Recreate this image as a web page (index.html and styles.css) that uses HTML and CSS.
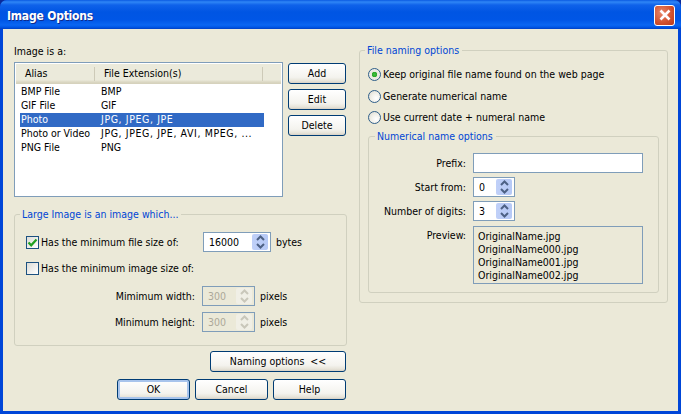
FILE: index.html
```html
<!DOCTYPE html>
<html lang="en">
<head>
<meta charset="utf-8">
<title>Image Options</title>
<link rel="stylesheet" href="styles.css">
</head>
<body>
<div class="window">
  <header class="titlebar">
    <span class="title">Image Options</span>
    <span class="close"><svg width="14" height="14" viewBox="0 0 14 14"><path d="M2.5 2.5 11.5 11.5M11.5 2.5 2.5 11.5" stroke="#fff" stroke-width="2.6" fill="none"/></svg></span>
  </header>
  <div class="client">
    <div class="col-left">
      <div class="caption">Image is a:</div>
      <div class="list-row">
        <div class="list">
          <div class="list-head"><span class="h-alias">Alias</span><span class="h-ext">File Extension(s)</span></div>
          <div class="item"><span class="alias">BMP File</span><span>BMP</span></div>
          <div class="item"><span class="alias">GIF File</span><span>GIF</span></div>
          <div class="item selected"><span class="alias">Photo</span><span class="ext-long">JPG, JPEG, JPE</span></div>
          <div class="item"><span class="alias">Photo or Video</span><span class="ext-long">JPG, JPEG, JPE, AVI, MPEG, ...</span></div>
          <div class="item"><span class="alias">PNG File</span><span>PNG</span></div>
        </div>
        <div class="list-buttons">
          <button class="btn">Add</button>
          <button class="btn">Edit</button>
          <button class="btn">Delete</button>
        </div>
      </div>
      <fieldset class="group large">
        <legend>Large Image is an image which...</legend>
        <div class="row file-row">
          <span class="check"><svg width="11" height="11" viewBox="0 0 11 11"><path d="M1.5 5.5 4.2 8.3 9.5 2.5" stroke="#21a121" stroke-width="2.2" fill="none"/></svg></span>
          <span class="check-label">Has the minimum file size of:</span>
          <div class="spin spin-wide"><span class="spin-value">16000</span><span class="spin-btns"><svg width="9" height="16" viewBox="0 0 9 16"><path d="M1 6 4.5 2.5 8 6M1 10 4.5 13.5 8 10" stroke="#4d6185" stroke-width="2" fill="none"/></svg></span></div>
          <span class="unit">bytes</span>
        </div>
        <div class="row image-row">
          <span class="check check-empty"></span>
          <span class="check-label">Has the minimum image size of:</span>
        </div>
        <div class="row dim-row first-dim">
          <span class="dim-label">Mimimum width:</span>
          <div class="spin spin-narrow disabled"><span class="spin-value">300</span><span class="spin-btns"><svg width="9" height="16" viewBox="0 0 9 16"><path d="M1 6 4.5 2.5 8 6M1 10 4.5 13.5 8 10" stroke="#c9c7ba" stroke-width="2" fill="none"/></svg></span></div>
          <span class="unit">pixels</span>
        </div>
        <div class="row dim-row second-dim">
          <span class="dim-label">Minimum height:</span>
          <div class="spin spin-narrow disabled"><span class="spin-value">300</span><span class="spin-btns"><svg width="9" height="16" viewBox="0 0 9 16"><path d="M1 6 4.5 2.5 8 6M1 10 4.5 13.5 8 10" stroke="#c9c7ba" stroke-width="2" fill="none"/></svg></span></div>
          <span class="unit">pixels</span>
        </div>
      </fieldset>
      <div class="naming-row"><button class="btn naming">Naming options &nbsp;&lt;&lt;</button></div>
      <div class="action-row">
        <button class="btn action default">OK</button>
        <button class="btn action">Cancel</button>
        <button class="btn action">Help</button>
      </div>
    </div>
    <div class="col-right">
      <fieldset class="group naming-group">
        <legend>File naming options</legend>
        <div class="radio-row"><span class="radio on"></span><span>Keep original file name found on the web page</span></div>
        <div class="radio-row r2"><span class="radio"></span><span>Generate numerical name</span></div>
        <div class="radio-row r3"><span class="radio"></span><span>Use current date + numeral name</span></div>
        <fieldset class="group inner">
          <legend>Numerical name options</legend>
          <div class="form">
            <label class="f-label">Prefix:</label>
            <div class="text-box"></div>
            <label class="f-label">Start from:</label>
            <div class="spin spin-small"><span class="spin-value">0</span><span class="spin-btns"><svg width="9" height="16" viewBox="0 0 9 16"><path d="M1 6 4.5 2.5 8 6M1 10 4.5 13.5 8 10" stroke="#4d6185" stroke-width="2" fill="none"/></svg></span></div>
            <label class="f-label">Number of digits:</label>
            <div class="spin spin-small"><span class="spin-value">3</span><span class="spin-btns"><svg width="9" height="16" viewBox="0 0 9 16"><path d="M1 6 4.5 2.5 8 6M1 10 4.5 13.5 8 10" stroke="#4d6185" stroke-width="2" fill="none"/></svg></span></div>
            <label class="f-label preview-label">Preview:</label>
            <div class="preview">OriginalName.jpg<br>OriginalName000.jpg<br>OriginalName001.jpg<br>OriginalName002.jpg</div>
          </div>
        </fieldset>
      </fieldset>
    </div>
  </div>
</div>
</body>
</html>
```
FILE: styles.css
```css
* { box-sizing: border-box; }
html, body { margin: 0; padding: 0; background: #0a2a9a; }
body { width: 681px; height: 414px; overflow: hidden; font: 10.5px/13px "DejaVu Sans Condensed", "Liberation Sans", sans-serif; color: #000; }
.window { width: 681px; height: 414px; display: flex; flex-direction: column; background: #0046d8; border-radius: 7px 7px 0 0; overflow: hidden; }
.titlebar { height: 29px; flex: none; display: flex; align-items: center; justify-content: space-between; padding: 1px 6px 0 7px;
  background: linear-gradient(#0a5ae2 0, #2f86f6 2px, #0f62ea 5px, #0055e3 12px, #0056e6 20px, #0a66f2 25px, #0058e8 27px, #0040c4 29px); }
.title { color: #fff; font: bold 12px/16px "DejaVu Sans Condensed", sans-serif; letter-spacing: -0.2px; margin-top: 2px; text-shadow: 1px 1px 0 #0f2a8c; }
.close { width: 21px; height: 21px; display: flex; align-items: center; justify-content: center; border: 1px solid #fff; border-radius: 3px; background: radial-gradient(circle at 35% 35%, #e8876a, #d1502c 60%, #b83a1c); }
.client { flex: 1; margin: 0 3px 3px; background: #ebe9d8; display: flex; gap: 12px; padding: 15px 0 0 11px; }
.col-left { width: 333px; }
.col-right { width: 309px; }
.caption { height: 13px; margin-top: 1px; }
.list-row { display: flex; gap: 5px; margin-top: 4px; height: 135px; }
.list { width: 269px; border: 1px solid #7f9db9; background: #fff; padding: 1px; }
.list-head { height: 20px; margin-bottom: 1px; display: flex; align-items: center; background: linear-gradient(#ebeadb 0, #ebeadb 16px, #e2dfcd 17px, #d6d2bd 19px); width: 265px; }
.h-alias { width: 79px; padding-left: 9px; border-right: 1px solid #cdcab8; height: 14px; }
.h-ext { width: 168px; padding-left: 9px; border-right: 1px solid #cdcab8; height: 14px; }
.item { width: 244px; height: 14px; margin-left: 4px; display: flex; padding-left: 1px; white-space: nowrap; }
.alias { width: 80px; }
.ext-long { letter-spacing: 0.6px; }
.selected { background: #316ac5; color: #fff; }
.list-buttons { display: flex; flex-direction: column; gap: 5px; padding-top: 1px; }
.btn { font: inherit; color: #000; width: 58px; height: 21px; padding: 0; border: 1px solid #003c74; border-radius: 3px;
  background: linear-gradient(#fff, #f4f3ee 70%, #e6e3d8 90%, #d6d0c5); }
.group { margin: 0; min-width: 0; border: 1px solid #d0d0bf; border-radius: 3px; }
.group legend { color: #0046d5; padding: 0 3px 0 2px; height: 13px; }
.large { margin-top: 11px; height: 138px; padding: 11px 11px 0; }
.large legend { margin-left: -6px; }
.row { display: flex; align-items: center; }
.file-row { height: 20px; }
.image-row { height: 13px; margin-top: 10px; }
.first-dim { height: 20px; margin-top: 11px; }
.second-dim { height: 20px; margin-top: 6px; }
.check { width: 13px; height: 13px; flex: none; border: 1px solid #1c5180; background: linear-gradient(135deg, #dcdcd7, #fff); display: flex; align-items: center; justify-content: center; }
.check-empty { background: linear-gradient(135deg, #dcdcd7, #fff); }
.check-label { margin-left: 2px; }
.file-row .check-label { width: 162px; }
.unit { margin-left: 5px; }
.dim-label { width: 169px; text-align: right; margin-right: 7px; }
.spin { height: 20px; border: 1px solid #7f9db9; background: #fff; display: flex; align-items: center; justify-content: space-between; flex: none; padding: 1px 2px 1px 5px; }
.spin-wide { width: 68px; }
.spin-narrow { width: 53px; }
.spin-small { width: 42px; height: 20px; }
.spin-btns { width: 16px; height: 16px; border-radius: 2px; display: flex; align-items: center; justify-content: center; background: linear-gradient(90deg, #c0d0f8, #b6c9f6); }
.disabled { background: #ebe9d8; color: #aca899; }
.disabled .spin-btns { background: #f0efe6; }
.naming-row { display: flex; justify-content: flex-end; margin: 5px 1px 0 0; }
.naming { width: 136px; }
.action-row { display: flex; justify-content: flex-end; gap: 5px; margin: 7px 1px 0 0; }
.action { width: 73px; }
.default { box-shadow: inset 0 0 0 2px #a8c4ec; }
.naming-group { height: 259px; padding: 11px 8px 0 8px; }
.naming-group > legend { margin-left: -3px; }
.radio-row { display: flex; align-items: center; gap: 2px; height: 13px; }
.r2 { margin-top: 9px; }
.r3 { margin-top: 8px; }
.radio { width: 13px; height: 13px; border-radius: 50%; border: 1px solid #2f5f8a; background: radial-gradient(circle at 65% 65%, #fff, #f0efe8 50%, #d8d6cc); flex: none; }
.on { background: radial-gradient(circle, #3fc03f 0, #2aa82a 2.5px, #e8e8e0 3px, #f4f4ee 100%); }
.inner { margin-top: 6px; height: 163px; padding: 10px 0 0 0; }
.inner legend { margin-left: 6px; }
.form { display: grid; grid-template-columns: 97px 170px; column-gap: 7px; row-gap: 4px; grid-template-rows: 20px 20px 20px 59px; }
.f-label { text-align: right; align-self: center; }
.preview-label { align-self: start; margin-top: 4px; }
.text-box { border: 1px solid #7f9db9; background: #fff; }
.preview { margin-top: 1px; border: 1px solid #7f9db9; padding: 3px 0 0 4px; }
```
